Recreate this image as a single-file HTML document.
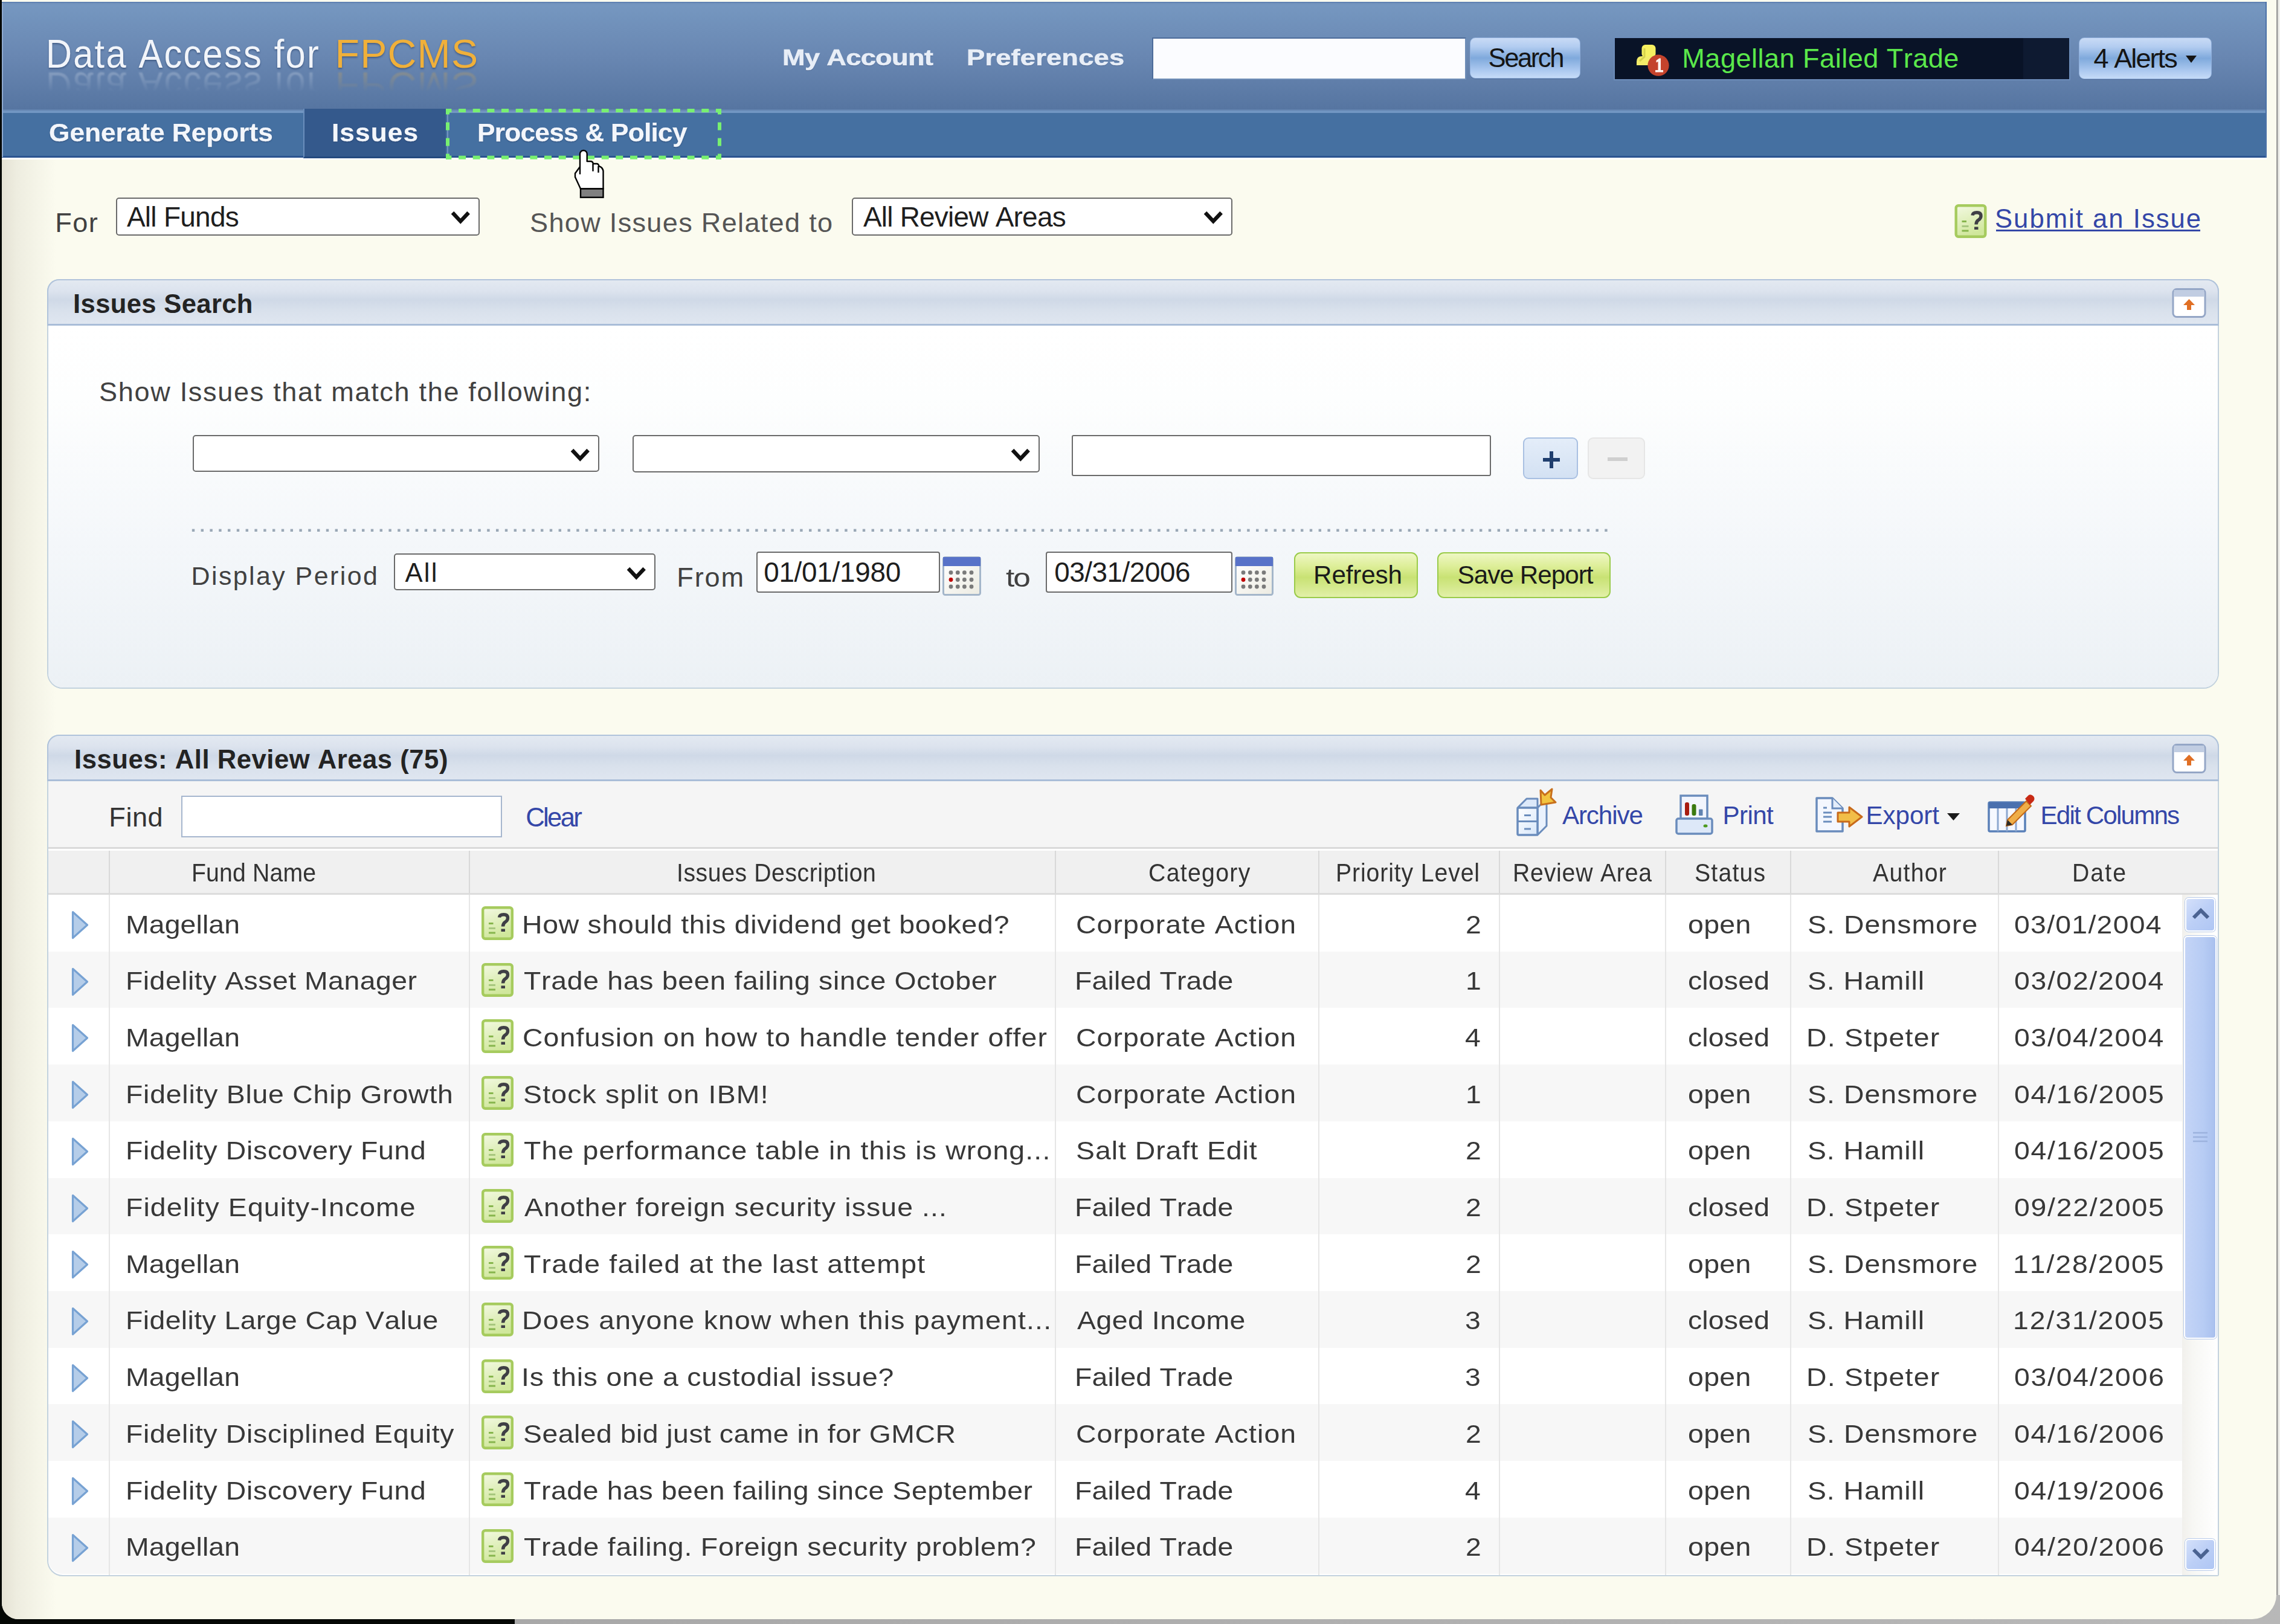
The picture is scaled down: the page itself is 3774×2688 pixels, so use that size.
<!DOCTYPE html>
<html><head><meta charset="utf-8"><title>Data Access for FPCMS - Issues</title>
<style>
html,body{margin:0;padding:0}
body{width:3774px;height:2688px;position:relative;overflow:hidden;background:#FBFBEF;font-family:"Liberation Sans",sans-serif;font-kerning:none}
.t{position:absolute;white-space:pre;line-height:0;font-kerning:none}
.r{position:absolute;box-sizing:border-box}
svg{position:absolute;overflow:visible}
</style></head><body>

<div class="r" style="left:0;top:0;width:3774px;height:2688px;background:linear-gradient(to right,#050805 0,#050805 852px,#A8A8A8 852px,#B8B8B8 100%)"></div>
<div class="r" style="left:3px;top:0;width:3765px;height:2680px;background:#FBFBEF;border-radius:0 0 40px 27px"></div>
<div class="r" style="left:3768px;top:0;width:6px;height:2640px;background:linear-gradient(to right,#9A9A9A 0,#9A9A9A 2px,#E8E8E4 3px,#F4F4F0 100%)"></div>
<div class="r" style="left:3px;top:260px;width:90px;height:2420px;background:linear-gradient(to right,#E4E2D4 0,#EEEDE0 25px,rgba(251,251,239,0) 90px);border-radius:0 0 0 27px"></div>
<div class="r" style="left:3px;top:3px;width:3749px;height:178px;background:linear-gradient(to bottom,#7191BA 0,#7597C0 6px,#6987B2 50%,#5675A1 100%)"></div>
<div class="r" style="left:3px;top:181px;width:3749px;height:2px;background:#6384B0"></div>
<div class="r" style="left:3px;top:183px;width:3749px;height:4px;background:#7196C2"></div>
<div class="r" style="left:3px;top:187px;width:3749px;height:71px;background:#4570A1"></div>
<div class="r" style="left:3px;top:258px;width:3749px;height:3px;background:#2B5490"></div>
<div class="r" style="left:3px;top:261px;width:3749px;height:3px;background:#FFFFFF"></div>
<div class="r" style="left:3px;top:3px;width:2px;height:257px;background:#8FAAD0"></div>
<div class="r" style="left:3px;top:3px;width:3749px;height:2px;background:#5F82B2"></div>
<div class="r" style="left:3750px;top:3px;width:2px;height:258px;background:#4C72A8"></div>
<div class="t" style="left:76.1px;top:88.5px;font-size:66.18px;letter-spacing:2.49px;color:#F2F5FA;transform:scaleX(0.9);transform-origin:0 0;text-shadow:0 2px 3px rgba(20,40,80,0.45);">Data Access for</div>
<div class="t" style="left:554.5px;top:88.5px;font-size:66.18px;letter-spacing:1.24px;color:#F0B03A;text-shadow:0 2px 3px rgba(20,40,80,0.45);">FPCMS</div>
<div class="r" style="left:0;top:0;width:900px;height:118px;transform:scaleY(-1);transform-origin:0 116px;-webkit-mask-image:linear-gradient(to bottom,rgba(0,0,0,0) 0,rgba(0,0,0,0) 80px,rgba(0,0,0,0.4) 112px);mask-image:linear-gradient(to bottom,rgba(0,0,0,0) 0,rgba(0,0,0,0) 80px,rgba(0,0,0,0.4) 112px);opacity:0.6;filter:blur(0.8px)">
<div class="t" style="left:76.1px;top:88.5px;font-size:66.18px;letter-spacing:2.49px;color:#F2F5FA;transform:scaleX(0.9);transform-origin:0 0;">Data Access for</div>
<div class="t" style="left:554.5px;top:88.5px;font-size:66.18px;letter-spacing:1.24px;color:#F0B03A;">FPCMS</div>
</div>
<div class="t" style="left:1294.9px;top:94.5px;font-size:37.09px;letter-spacing:-0.59px;color:#E8EEF7;font-weight:bold;transform:scaleX(1.22);transform-origin:0 0;-webkit-text-stroke:0.6px #E8EEF7;text-shadow:0 1px 1px rgba(30,50,90,0.5);">My Account</div>
<div class="t" style="left:1599.9px;top:94.5px;font-size:37.09px;letter-spacing:0.17px;color:#E8EEF7;font-weight:bold;transform:scaleX(1.22);transform-origin:0 0;-webkit-text-stroke:0.6px #E8EEF7;text-shadow:0 1px 1px rgba(30,50,90,0.5);">Preferences</div>
<div class="r " style="left:1907px;top:62px;width:520px;height:70px;background:#FBFCFF;border:2px solid #4D6C9A;border-right-color:#6F8EB8;border-bottom-color:#6F8EB8"></div>
<div class="r " style="left:2433px;top:62px;width:183px;height:68px;border-radius:9px;background:linear-gradient(to bottom,#C9DBF6 0,#B2CCF0 22%,#7FA9DC 50%,#A8C6EE 78%,#C6DCF8 100%);border:1px solid #8FAEDA;box-shadow:0 1px 0 rgba(40,60,100,0.25)"></div>
<div class="t" style="left:2463.5px;top:96.0px;font-size:43.64px;letter-spacing:-2.46px;color:#151515;">Search</div>
<div class="r " style="left:2671px;top:61px;width:756px;height:72px;background:#091327;border:2px solid #6D8DBA"></div>
<div class="r " style="left:3349px;top:63px;width:76px;height:68px;background:#0E1A31"></div>
<svg style="left:2700px;top:68px" width="70" height="62" viewBox="0 0 70 62">
<rect x="17.5" y="6" width="23" height="21" rx="6" fill="#F6F060"/>
<path d="M9 40 L9 34 Q9 25 18 25 L34 25 L34 40 Z" fill="#F3EC6A"/>
<path d="M22 12 L22 26 L14 33" fill="none" stroke="#C8C445" stroke-width="3" opacity="0.7"/>
<circle cx="45" cy="40.2" r="17.6" fill="#C4432C"/>
<path d="M41.5 32 L46.5 28.5 L49 28.5 L49 48 L53 48 L53 51.5 L40 51.5 L40 48 L44.5 48 L44.5 34 L41.5 35.5 Z" fill="#FFF4F0"/>
</svg>
<div class="t" style="left:2784.3px;top:96.5px;font-size:45.09px;letter-spacing:0.48px;color:#5BE84B;">Magellan Failed Trade</div>
<div class="r " style="left:3441px;top:62px;width:220px;height:69px;border-radius:9px;background:linear-gradient(to bottom,#C9DBF6 0,#B2CCF0 22%,#7FA9DC 50%,#A8C6EE 78%,#C6DCF8 100%);border:1px solid #8FAEDA;box-shadow:0 1px 0 rgba(40,60,100,0.25)"></div>
<div class="t" style="left:3465.5px;top:96.5px;font-size:45.09px;letter-spacing:-1.95px;color:#151515;">4 Alerts</div>
<svg style="left:3616px;top:90px" width="22" height="16"><path d="M2 2 L20 2 L11 14 Z" fill="#151515"/></svg>
<div class="t" style="left:81.2px;top:219.5px;font-size:42.18px;letter-spacing:-0.05px;color:#F3F6FB;font-weight:bold;transform:scaleX(1.05);transform-origin:0 0;-webkit-text-stroke:0.25px #F3F6FB;text-shadow:0 1px 2px rgba(20,40,80,0.55);">Generate Reports</div>
<div class="r " style="left:502px;top:180px;width:236px;height:82px;background:#34598C;border-left:2px solid #6A8EBC;border-bottom:3px solid #24497F"></div>
<div class="t" style="left:549.0px;top:219.5px;font-size:42.18px;letter-spacing:0.98px;color:#F3F6FB;font-weight:bold;transform:scaleX(1.05);transform-origin:0 0;-webkit-text-stroke:0.25px #F3F6FB;text-shadow:0 1px 2px rgba(20,40,80,0.55);">Issues</div>
<div class="r " style="left:740px;top:183px;width:449px;height:77px;border-left:2px solid #7393C0;border-top:2px solid #7393C0"></div>
<div class="t" style="left:790.0px;top:219.5px;font-size:42.18px;letter-spacing:-0.75px;color:#F3F6FB;font-weight:bold;transform:scaleX(1.05);transform-origin:0 0;-webkit-text-stroke:0.25px #F3F6FB;text-shadow:0 1px 2px rgba(20,40,80,0.55);">Process &amp; Policy</div>
<svg style="left:0;top:0" width="1300" height="300"><g fill="#78F070"><rect x="738.0" y="180" width="9.4" height="6"/><rect x="759.1" y="180" width="12.0" height="6"/><rect x="782.7" y="180" width="12.0" height="6"/><rect x="806.4" y="180" width="12.0" height="6"/><rect x="830.0" y="180" width="12.0" height="6"/><rect x="853.7" y="180" width="12.0" height="6"/><rect x="877.4" y="180" width="12.0" height="6"/><rect x="901.0" y="180" width="12.0" height="6"/><rect x="924.7" y="180" width="12.0" height="6"/><rect x="948.3" y="180" width="12.0" height="6"/><rect x="972.0" y="180" width="12.0" height="6"/><rect x="995.7" y="180" width="12.0" height="6"/><rect x="1019.3" y="180" width="12.0" height="6"/><rect x="1043.0" y="180" width="12.0" height="6"/><rect x="1066.6" y="180" width="12.0" height="6"/><rect x="1090.3" y="180" width="12.0" height="6"/><rect x="1114.0" y="180" width="12.0" height="6"/><rect x="1137.6" y="180" width="12.0" height="6"/><rect x="1161.3" y="180" width="12.0" height="6"/><rect x="1184.9" y="180" width="9.1" height="6"/><rect x="738.0" y="257.7" width="9.4" height="6"/><rect x="759.1" y="257.7" width="12.0" height="6"/><rect x="782.7" y="257.7" width="12.0" height="6"/><rect x="806.4" y="257.7" width="12.0" height="6"/><rect x="830.0" y="257.7" width="12.0" height="6"/><rect x="853.7" y="257.7" width="12.0" height="6"/><rect x="877.4" y="257.7" width="12.0" height="6"/><rect x="901.0" y="257.7" width="12.0" height="6"/><rect x="924.7" y="257.7" width="12.0" height="6"/><rect x="948.3" y="257.7" width="12.0" height="6"/><rect x="972.0" y="257.7" width="12.0" height="6"/><rect x="995.7" y="257.7" width="12.0" height="6"/><rect x="1019.3" y="257.7" width="12.0" height="6"/><rect x="1043.0" y="257.7" width="12.0" height="6"/><rect x="1066.6" y="257.7" width="12.0" height="6"/><rect x="1090.3" y="257.7" width="12.0" height="6"/><rect x="1114.0" y="257.7" width="12.0" height="6"/><rect x="1137.6" y="257.7" width="12.0" height="6"/><rect x="1161.3" y="257.7" width="12.0" height="6"/><rect x="1184.9" y="257.7" width="9.1" height="6"/><rect x="738" y="180.0" width="6" height="9.4"/><rect x="738" y="202.5" width="6" height="13.0"/><rect x="738" y="228.6" width="6" height="13.0"/><rect x="738" y="254.7" width="6" height="9.0"/><rect x="1188" y="180.0" width="6" height="9.4"/><rect x="1188" y="202.5" width="6" height="13.0"/><rect x="1188" y="228.6" width="6" height="13.0"/><rect x="1188" y="254.7" width="6" height="9.0"/><path d="M738 180 H747 V186 H744 V189 H738 Z"/><path d="M1194 180 H1185 V186 H1188 V189 H1194 Z"/><path d="M738 263.7 H747 V257.7 H744 V254.7 H738 Z"/><path d="M1194 263.7 H1185 V257.7 H1188 V254.7 H1194 Z"/></g></svg>
<div class="t" style="left:91.3px;top:368.5px;font-size:45.09px;letter-spacing:1.44px;color:#414141;">For</div>
<div class="r " style="left:192px;top:327px;width:602px;height:63px;background:#fff;border:2px solid #6A6A6A;border-radius:5px"></div>
<div class="t" style="left:209.9px;top:358.6px;font-size:45.96px;letter-spacing:-0.71px;color:#1E1E1E;">All Funds</div>
<svg style="left:742.7px;top:345.8px" width="38.6" height="28.2"><path d="M6 6 L19.3 20.2 L32.6 6" fill="none" stroke="#111111" stroke-width="6.3" stroke-linecap="butt" stroke-linejoin="miter"/></svg>
<div class="t" style="left:877.0px;top:368.5px;font-size:45.09px;letter-spacing:1.31px;color:#555555;">Show Issues Related to</div>
<div class="r " style="left:1410px;top:327px;width:630px;height:63px;background:#fff;border:2px solid #6A6A6A;border-radius:5px"></div>
<div class="t" style="left:1428.9px;top:358.6px;font-size:45.96px;letter-spacing:-0.77px;color:#1E1E1E;">All Review Areas</div>
<svg style="left:1988.7px;top:345.8px" width="38.6" height="28.2"><path d="M6 6 L19.3 20.2 L32.6 6" fill="none" stroke="#111111" stroke-width="6.3" stroke-linecap="butt" stroke-linejoin="miter"/></svg>
<svg style="left:3235px;top:338px" width="54" height="56" viewBox="0 0 53 56">
<defs><linearGradient id="ig3235_338" x1="0" y1="0" x2="0.3" y2="1"><stop offset="0" stop-color="#F3F9E2"/><stop offset="1" stop-color="#D0E79C"/></linearGradient></defs>
<rect x="2.2" y="2.2" width="48.6" height="51.6" rx="4" fill="url(#ig3235_338)" stroke="#A6CB5E" stroke-width="4.4"/>
<path d="M29.5 18.5 Q30 13.8 36.8 13.8 Q43.5 13.8 43.5 19.5 Q43.5 23.5 39.5 26 Q35.5 28.5 35.5 33.5" fill="none" stroke="#3F3F45" stroke-width="5.4"/>
<rect x="32.5" y="37.5" width="6.5" height="4.5" fill="#3F3F45"/>
<rect x="12" y="27" width="7.5" height="3" fill="#86B54C"/><rect x="12" y="35" width="11" height="3" fill="#A7C77E"/><rect x="12" y="42.5" width="11" height="3" fill="#86B54C"/>
</svg>
<div class="t" style="left:3302.0px;top:362.0px;font-size:43.64px;letter-spacing:2.02px;color:#3447A8;">Submit an Issue</div>
<div class="r " style="left:3304px;top:380px;width:338px;height:3px;background:#3447A8"></div>
<div class="r" style="left:78px;top:462px;width:3595px;height:678px;border:2px solid #C3D2DE;border-radius:20px 20px 26px 26px;overflow:hidden;background:#fff"></div>
<div class="r" style="left:78px;top:462px;width:3595px;height:77px;border-radius:20px 20px 0 0;border:2px solid #B0C3DB;border-bottom:3px solid #A9BDD8;background:linear-gradient(to bottom,#E3E9F1 0,#DCE3EE 25%,#CFD9E7 45%,#D9E1EC 70%,#DFE6F0 100%)"></div>
<div class="t" style="left:121.1px;top:503.0px;font-size:43.64px;letter-spacing:0.33px;color:#232323;font-weight:bold;">Issues Search</div>
<svg style="left:3594px;top:476px" width="60" height="52" viewBox="0 0 60 52">
<rect x="3" y="2.5" width="53" height="46" rx="6" fill="#fff" stroke="#94A6C6" stroke-width="3"/>
<rect x="4.5" y="4" width="50" height="11" fill="#C1CDE2"/>
<path d="M29.5 19 L39 29 L33 29 L33 37 L26 37 L26 29 L20 29 Z" fill="#E06F24"/>
</svg>
<div class="r" style="left:80px;top:539px;width:3591px;height:599px;border-radius:0 0 24px 24px;background:linear-gradient(to bottom,#FFFFFF 0,#FDFEFE 20%,#F4F7FA 60%,#ECF1F5 100%)"></div>
<div class="t" style="left:164.0px;top:648.5px;font-size:45.09px;letter-spacing:1.67px;color:#414141;">Show Issues that match the following:</div>
<div class="r " style="left:319px;top:720px;width:673px;height:61px;background:#fff;border:2px solid #6A6A6A;border-radius:5px"></div>
<svg style="left:940.7px;top:739.3px" width="38.6" height="28.2"><path d="M6 6 L19.3 20.2 L32.6 6" fill="none" stroke="#111111" stroke-width="6.3" stroke-linecap="butt" stroke-linejoin="miter"/></svg>
<div class="r " style="left:1047px;top:720px;width:674px;height:62px;background:#fff;border:2px solid #6A6A6A;border-radius:5px"></div>
<svg style="left:1669.7px;top:738.8px" width="38.6" height="28.2"><path d="M6 6 L19.3 20.2 L32.6 6" fill="none" stroke="#111111" stroke-width="6.3" stroke-linecap="butt" stroke-linejoin="miter"/></svg>
<div class="r " style="left:1774px;top:720px;width:694px;height:68px;background:#fff;border:2px solid #6A6A6A;border-radius:3px"></div>
<div class="r " style="left:2521px;top:724px;width:91px;height:69px;border-radius:9px;border:2px solid #A9C0E2;background:linear-gradient(to bottom,#E4EDF9 0,#D3E1F3 100%)"></div>
<svg style="left:2548px;top:741px" width="40" height="40"><path d="M6 20 H34 M20 6 V34" stroke="#1F3E6E" stroke-width="6"/></svg>
<div class="r " style="left:2628px;top:724px;width:95px;height:69px;border-radius:9px;border:2px solid #E6E6E6;background:#F2F2F2"></div>
<svg style="left:2658px;top:750px" width="40" height="20"><path d="M3 10 H36" stroke="#CFCFCF" stroke-width="6"/></svg>
<svg style="left:0;top:0" width="2700" height="900"><g fill="#9AA8B6"><rect x="317.8" y="875.6" width="4.4" height="4.4"/><rect x="332.6" y="875.6" width="4.4" height="4.4"/><rect x="347.4" y="875.6" width="4.4" height="4.4"/><rect x="362.2" y="875.6" width="4.4" height="4.4"/><rect x="377.0" y="875.6" width="4.4" height="4.4"/><rect x="391.8" y="875.6" width="4.4" height="4.4"/><rect x="406.6" y="875.6" width="4.4" height="4.4"/><rect x="421.4" y="875.6" width="4.4" height="4.4"/><rect x="436.2" y="875.6" width="4.4" height="4.4"/><rect x="451.0" y="875.6" width="4.4" height="4.4"/><rect x="465.8" y="875.6" width="4.4" height="4.4"/><rect x="480.6" y="875.6" width="4.4" height="4.4"/><rect x="495.4" y="875.6" width="4.4" height="4.4"/><rect x="510.2" y="875.6" width="4.4" height="4.4"/><rect x="525.0" y="875.6" width="4.4" height="4.4"/><rect x="539.8" y="875.6" width="4.4" height="4.4"/><rect x="554.6" y="875.6" width="4.4" height="4.4"/><rect x="569.4" y="875.6" width="4.4" height="4.4"/><rect x="584.2" y="875.6" width="4.4" height="4.4"/><rect x="599.0" y="875.6" width="4.4" height="4.4"/><rect x="613.8" y="875.6" width="4.4" height="4.4"/><rect x="628.6" y="875.6" width="4.4" height="4.4"/><rect x="643.4" y="875.6" width="4.4" height="4.4"/><rect x="658.2" y="875.6" width="4.4" height="4.4"/><rect x="673.0" y="875.6" width="4.4" height="4.4"/><rect x="687.8" y="875.6" width="4.4" height="4.4"/><rect x="702.6" y="875.6" width="4.4" height="4.4"/><rect x="717.4" y="875.6" width="4.4" height="4.4"/><rect x="732.2" y="875.6" width="4.4" height="4.4"/><rect x="747.0" y="875.6" width="4.4" height="4.4"/><rect x="761.8" y="875.6" width="4.4" height="4.4"/><rect x="776.6" y="875.6" width="4.4" height="4.4"/><rect x="791.4" y="875.6" width="4.4" height="4.4"/><rect x="806.2" y="875.6" width="4.4" height="4.4"/><rect x="821.0" y="875.6" width="4.4" height="4.4"/><rect x="835.8" y="875.6" width="4.4" height="4.4"/><rect x="850.6" y="875.6" width="4.4" height="4.4"/><rect x="865.4" y="875.6" width="4.4" height="4.4"/><rect x="880.2" y="875.6" width="4.4" height="4.4"/><rect x="895.0" y="875.6" width="4.4" height="4.4"/><rect x="909.8" y="875.6" width="4.4" height="4.4"/><rect x="924.6" y="875.6" width="4.4" height="4.4"/><rect x="939.4" y="875.6" width="4.4" height="4.4"/><rect x="954.2" y="875.6" width="4.4" height="4.4"/><rect x="969.0" y="875.6" width="4.4" height="4.4"/><rect x="983.8" y="875.6" width="4.4" height="4.4"/><rect x="998.6" y="875.6" width="4.4" height="4.4"/><rect x="1013.4" y="875.6" width="4.4" height="4.4"/><rect x="1028.2" y="875.6" width="4.4" height="4.4"/><rect x="1043.0" y="875.6" width="4.4" height="4.4"/><rect x="1057.8" y="875.6" width="4.4" height="4.4"/><rect x="1072.6" y="875.6" width="4.4" height="4.4"/><rect x="1087.4" y="875.6" width="4.4" height="4.4"/><rect x="1102.2" y="875.6" width="4.4" height="4.4"/><rect x="1117.0" y="875.6" width="4.4" height="4.4"/><rect x="1131.8" y="875.6" width="4.4" height="4.4"/><rect x="1146.6" y="875.6" width="4.4" height="4.4"/><rect x="1161.4" y="875.6" width="4.4" height="4.4"/><rect x="1176.2" y="875.6" width="4.4" height="4.4"/><rect x="1191.0" y="875.6" width="4.4" height="4.4"/><rect x="1205.8" y="875.6" width="4.4" height="4.4"/><rect x="1220.6" y="875.6" width="4.4" height="4.4"/><rect x="1235.4" y="875.6" width="4.4" height="4.4"/><rect x="1250.2" y="875.6" width="4.4" height="4.4"/><rect x="1265.0" y="875.6" width="4.4" height="4.4"/><rect x="1279.8" y="875.6" width="4.4" height="4.4"/><rect x="1294.6" y="875.6" width="4.4" height="4.4"/><rect x="1309.4" y="875.6" width="4.4" height="4.4"/><rect x="1324.2" y="875.6" width="4.4" height="4.4"/><rect x="1339.0" y="875.6" width="4.4" height="4.4"/><rect x="1353.8" y="875.6" width="4.4" height="4.4"/><rect x="1368.6" y="875.6" width="4.4" height="4.4"/><rect x="1383.4" y="875.6" width="4.4" height="4.4"/><rect x="1398.2" y="875.6" width="4.4" height="4.4"/><rect x="1413.0" y="875.6" width="4.4" height="4.4"/><rect x="1427.8" y="875.6" width="4.4" height="4.4"/><rect x="1442.6" y="875.6" width="4.4" height="4.4"/><rect x="1457.4" y="875.6" width="4.4" height="4.4"/><rect x="1472.2" y="875.6" width="4.4" height="4.4"/><rect x="1487.0" y="875.6" width="4.4" height="4.4"/><rect x="1501.8" y="875.6" width="4.4" height="4.4"/><rect x="1516.6" y="875.6" width="4.4" height="4.4"/><rect x="1531.4" y="875.6" width="4.4" height="4.4"/><rect x="1546.2" y="875.6" width="4.4" height="4.4"/><rect x="1561.0" y="875.6" width="4.4" height="4.4"/><rect x="1575.8" y="875.6" width="4.4" height="4.4"/><rect x="1590.6" y="875.6" width="4.4" height="4.4"/><rect x="1605.4" y="875.6" width="4.4" height="4.4"/><rect x="1620.2" y="875.6" width="4.4" height="4.4"/><rect x="1635.0" y="875.6" width="4.4" height="4.4"/><rect x="1649.8" y="875.6" width="4.4" height="4.4"/><rect x="1664.6" y="875.6" width="4.4" height="4.4"/><rect x="1679.4" y="875.6" width="4.4" height="4.4"/><rect x="1694.2" y="875.6" width="4.4" height="4.4"/><rect x="1709.0" y="875.6" width="4.4" height="4.4"/><rect x="1723.8" y="875.6" width="4.4" height="4.4"/><rect x="1738.6" y="875.6" width="4.4" height="4.4"/><rect x="1753.4" y="875.6" width="4.4" height="4.4"/><rect x="1768.2" y="875.6" width="4.4" height="4.4"/><rect x="1783.0" y="875.6" width="4.4" height="4.4"/><rect x="1797.8" y="875.6" width="4.4" height="4.4"/><rect x="1812.6" y="875.6" width="4.4" height="4.4"/><rect x="1827.4" y="875.6" width="4.4" height="4.4"/><rect x="1842.2" y="875.6" width="4.4" height="4.4"/><rect x="1857.0" y="875.6" width="4.4" height="4.4"/><rect x="1871.8" y="875.6" width="4.4" height="4.4"/><rect x="1886.6" y="875.6" width="4.4" height="4.4"/><rect x="1901.4" y="875.6" width="4.4" height="4.4"/><rect x="1916.2" y="875.6" width="4.4" height="4.4"/><rect x="1931.0" y="875.6" width="4.4" height="4.4"/><rect x="1945.8" y="875.6" width="4.4" height="4.4"/><rect x="1960.6" y="875.6" width="4.4" height="4.4"/><rect x="1975.4" y="875.6" width="4.4" height="4.4"/><rect x="1990.2" y="875.6" width="4.4" height="4.4"/><rect x="2005.0" y="875.6" width="4.4" height="4.4"/><rect x="2019.8" y="875.6" width="4.4" height="4.4"/><rect x="2034.6" y="875.6" width="4.4" height="4.4"/><rect x="2049.4" y="875.6" width="4.4" height="4.4"/><rect x="2064.2" y="875.6" width="4.4" height="4.4"/><rect x="2079.0" y="875.6" width="4.4" height="4.4"/><rect x="2093.8" y="875.6" width="4.4" height="4.4"/><rect x="2108.6" y="875.6" width="4.4" height="4.4"/><rect x="2123.4" y="875.6" width="4.4" height="4.4"/><rect x="2138.2" y="875.6" width="4.4" height="4.4"/><rect x="2153.0" y="875.6" width="4.4" height="4.4"/><rect x="2167.8" y="875.6" width="4.4" height="4.4"/><rect x="2182.6" y="875.6" width="4.4" height="4.4"/><rect x="2197.4" y="875.6" width="4.4" height="4.4"/><rect x="2212.2" y="875.6" width="4.4" height="4.4"/><rect x="2227.0" y="875.6" width="4.4" height="4.4"/><rect x="2241.8" y="875.6" width="4.4" height="4.4"/><rect x="2256.6" y="875.6" width="4.4" height="4.4"/><rect x="2271.4" y="875.6" width="4.4" height="4.4"/><rect x="2286.2" y="875.6" width="4.4" height="4.4"/><rect x="2301.0" y="875.6" width="4.4" height="4.4"/><rect x="2315.8" y="875.6" width="4.4" height="4.4"/><rect x="2330.6" y="875.6" width="4.4" height="4.4"/><rect x="2345.4" y="875.6" width="4.4" height="4.4"/><rect x="2360.2" y="875.6" width="4.4" height="4.4"/><rect x="2375.0" y="875.6" width="4.4" height="4.4"/><rect x="2389.8" y="875.6" width="4.4" height="4.4"/><rect x="2404.6" y="875.6" width="4.4" height="4.4"/><rect x="2419.4" y="875.6" width="4.4" height="4.4"/><rect x="2434.2" y="875.6" width="4.4" height="4.4"/><rect x="2449.0" y="875.6" width="4.4" height="4.4"/><rect x="2463.8" y="875.6" width="4.4" height="4.4"/><rect x="2478.6" y="875.6" width="4.4" height="4.4"/><rect x="2493.4" y="875.6" width="4.4" height="4.4"/><rect x="2508.2" y="875.6" width="4.4" height="4.4"/><rect x="2523.0" y="875.6" width="4.4" height="4.4"/><rect x="2537.8" y="875.6" width="4.4" height="4.4"/><rect x="2552.6" y="875.6" width="4.4" height="4.4"/><rect x="2567.4" y="875.6" width="4.4" height="4.4"/><rect x="2582.2" y="875.6" width="4.4" height="4.4"/><rect x="2597.0" y="875.6" width="4.4" height="4.4"/><rect x="2611.8" y="875.6" width="4.4" height="4.4"/><rect x="2626.6" y="875.6" width="4.4" height="4.4"/><rect x="2641.4" y="875.6" width="4.4" height="4.4"/><rect x="2656.2" y="875.6" width="4.4" height="4.4"/></g></svg>
<div class="t" style="left:316.5px;top:952.5px;font-size:42.91px;letter-spacing:2.44px;color:#414141;">Display Period</div>
<div class="r " style="left:652px;top:916px;width:433px;height:61px;background:#fff;border:2px solid #6A6A6A;border-radius:5px"></div>
<div class="t" style="left:670.5px;top:948.0px;font-size:43.64px;letter-spacing:2.25px;color:#1E1E1E;">All</div>
<svg style="left:1033.7px;top:934.8px" width="38.6" height="28.2"><path d="M6 6 L19.3 20.2 L32.6 6" fill="none" stroke="#111111" stroke-width="6.3" stroke-linecap="butt" stroke-linejoin="miter"/></svg>
<div class="t" style="left:1120.3px;top:955.5px;font-size:45.09px;letter-spacing:1.86px;color:#414141;">From</div>
<div class="r " style="left:1252px;top:913px;width:304px;height:68px;background:#fff;border:2px solid #6A6A6A;border-radius:4px"></div>
<div class="t" style="left:1264.2px;top:947.5px;font-size:45.82px;letter-spacing:-0.26px;color:#1E1E1E;">01/01/1980</div>
<svg style="left:1560px;top:921px" width="64" height="66" viewBox="0 0 64 66">
<defs><linearGradient id="cal1560" x1="0" y1="0" x2="1" y2="1"><stop offset="0" stop-color="#FFFFFF"/><stop offset="1" stop-color="#ECEBE2"/></linearGradient></defs>
<rect x="1.5" y="1.5" width="61" height="62" rx="3" fill="url(#cal1560)" stroke="#A4B6CA" stroke-width="3"/>
<rect x="1" y="1" width="62" height="15" fill="#5872C8"/>
<circle cx="14" cy="26.7" r="3.4" fill="#7A7A7A"/><circle cx="25.3" cy="26.7" r="3.4" fill="#7A7A7A"/><circle cx="36.4" cy="26.7" r="3.4" fill="#7A7A7A"/><circle cx="48" cy="26.7" r="3.4" fill="#7A7A7A"/><circle cx="14" cy="38.5" r="3.4" fill="#C00000"/><circle cx="25.3" cy="38.5" r="3.4" fill="#7A7A7A"/><circle cx="36.4" cy="38.5" r="3.4" fill="#7A7A7A"/><circle cx="48" cy="38.5" r="3.4" fill="#7A7A7A"/><circle cx="14" cy="50" r="3.4" fill="#7A7A7A"/><circle cx="25.3" cy="50" r="3.4" fill="#7A7A7A"/><circle cx="36.4" cy="50" r="3.4" fill="#7A7A7A"/><circle cx="48" cy="50" r="3.4" fill="#7A7A7A"/></svg>
<div class="t" style="left:1665.2px;top:956.5px;font-size:42.20px;letter-spacing:-1.66px;color:#414141;transform:scaleX(1.22);transform-origin:0 0;">to</div>
<div class="r " style="left:1731px;top:913px;width:309px;height:68px;background:#fff;border:2px solid #6A6A6A;border-radius:4px"></div>
<div class="t" style="left:1745.2px;top:947.5px;font-size:45.82px;letter-spacing:-0.45px;color:#1E1E1E;">03/31/2006</div>
<svg style="left:2044px;top:921px" width="64" height="66" viewBox="0 0 64 66">
<defs><linearGradient id="cal2044" x1="0" y1="0" x2="1" y2="1"><stop offset="0" stop-color="#FFFFFF"/><stop offset="1" stop-color="#ECEBE2"/></linearGradient></defs>
<rect x="1.5" y="1.5" width="61" height="62" rx="3" fill="url(#cal2044)" stroke="#A4B6CA" stroke-width="3"/>
<rect x="1" y="1" width="62" height="15" fill="#5872C8"/>
<circle cx="14" cy="26.7" r="3.4" fill="#7A7A7A"/><circle cx="25.3" cy="26.7" r="3.4" fill="#7A7A7A"/><circle cx="36.4" cy="26.7" r="3.4" fill="#7A7A7A"/><circle cx="48" cy="26.7" r="3.4" fill="#7A7A7A"/><circle cx="14" cy="38.5" r="3.4" fill="#C00000"/><circle cx="25.3" cy="38.5" r="3.4" fill="#7A7A7A"/><circle cx="36.4" cy="38.5" r="3.4" fill="#7A7A7A"/><circle cx="48" cy="38.5" r="3.4" fill="#7A7A7A"/><circle cx="14" cy="50" r="3.4" fill="#7A7A7A"/><circle cx="25.3" cy="50" r="3.4" fill="#7A7A7A"/><circle cx="36.4" cy="50" r="3.4" fill="#7A7A7A"/><circle cx="48" cy="50" r="3.4" fill="#7A7A7A"/></svg>
<div class="r " style="left:2142px;top:914px;width:205px;height:76px;border-radius:11px;border:2px solid #9ACB4A;background:linear-gradient(to bottom,#EEF7C4 0,#DDEE98 30%,#C9E274 55%,#D3E88A 75%,#E2F0A8 100%)"></div>
<div class="t" style="left:2174.1px;top:951.5px;font-size:42.18px;letter-spacing:-0.15px;color:#1A1A1A;">Refresh</div>
<div class="r " style="left:2379px;top:914px;width:287px;height:76px;border-radius:11px;border:2px solid #9ACB4A;background:linear-gradient(to bottom,#EEF7C4 0,#DDEE98 30%,#C9E274 55%,#D3E88A 75%,#E2F0A8 100%)"></div>
<div class="t" style="left:2412.6px;top:951.5px;font-size:42.18px;letter-spacing:-0.95px;color:#1A1A1A;">Save Report</div>
<div class="r" style="left:78px;top:1216px;width:3595px;height:1393px;border:2px solid #C3D2DE;border-radius:20px 20px 3px 26px;overflow:hidden;background:#fff"></div>
<div class="r" style="left:78px;top:1216px;width:3595px;height:77px;border-radius:20px 20px 0 0;border:2px solid #B0C3DB;border-bottom:3px solid #A9BDD8;background:linear-gradient(to bottom,#E3E9F1 0,#DCE3EE 25%,#CFD9E7 45%,#D9E1EC 70%,#DFE6F0 100%)"></div>
<div class="t" style="left:123.1px;top:1257.0px;font-size:43.64px;letter-spacing:0.52px;color:#232323;font-weight:bold;">Issues: All Review Areas (75)</div>
<svg style="left:3594px;top:1230px" width="60" height="52" viewBox="0 0 60 52">
<rect x="3" y="2.5" width="53" height="46" rx="6" fill="#fff" stroke="#94A6C6" stroke-width="3"/>
<rect x="4.5" y="4" width="50" height="11" fill="#C1CDE2"/>
<path d="M29.5 19 L39 29 L33 29 L33 37 L26 37 L26 29 L20 29 Z" fill="#E06F24"/>
</svg>
<div class="r " style="left:80px;top:1293px;width:3591px;height:110px;background:#F5F5F5"></div>
<div class="r " style="left:80px;top:1402px;width:3591px;height:3px;background:#DADADA"></div>
<div class="r " style="left:80px;top:1405px;width:3591px;height:3px;background:#FFFFFF"></div>
<div class="t" style="left:180.3px;top:1352.5px;font-size:45.09px;letter-spacing:0.55px;color:#333333;">Find</div>
<div class="r " style="left:300px;top:1317px;width:531px;height:69px;background:#fff;border:2px solid #A6B6CE"></div>
<div class="t" style="left:870.3px;top:1353.0px;font-size:43.64px;letter-spacing:-2.71px;color:#3447A8;">Clear</div>
<svg style="left:2505px;top:1300px" width="80" height="90" viewBox="0 0 80 90">
<defs><linearGradient id="arc1" x1="0" y1="0" x2="1" y2="1"><stop offset="0" stop-color="#FFFFFF"/><stop offset="1" stop-color="#D6E6FA"/></linearGradient></defs>
<path d="M7 37 L22 22 L40 22 L40 37 Z" fill="#DCE9FA" stroke="#6A8CBC" stroke-width="3" stroke-linejoin="round"/>
<path d="M40 37 L55 22 L55 67 L40 82 Z" fill="#EAF2FD" stroke="#6A8CBC" stroke-width="3" stroke-linejoin="round"/>
<rect x="7" y="37" width="33" height="45" rx="2" fill="url(#arc1)" stroke="#6A8CBC" stroke-width="3.5"/>
<line x1="7" y1="59.5" x2="40" y2="59.5" stroke="#6A8CBC" stroke-width="3"/>
<line x1="18" y1="49.5" x2="29" y2="49.5" stroke="#6A8CBC" stroke-width="3"/>
<line x1="18" y1="72" x2="29" y2="72" stroke="#6A8CBC" stroke-width="3"/>
<path d="M45 8 L52 16 L64 6 L62 20 L70 28 L58 30 L46 32 Z" fill="#F2C440" stroke="#C8701C" stroke-width="3" stroke-linejoin="round"/>
</svg>
<div class="t" style="left:2585.9px;top:1349.5px;font-size:42.18px;letter-spacing:-1.11px;color:#3447A8;">Archive</div>
<svg style="left:2770px;top:1312px" width="70" height="74" viewBox="0 0 70 74">
<rect x="12" y="5" width="44" height="38" fill="#F2F5FD" stroke="#6A8CBC" stroke-width="3.5"/>
<rect x="19" y="16" width="7" height="22" rx="3" fill="#A81C10"/>
<rect x="30.5" y="19" width="7" height="19" rx="3" fill="#3B7A10"/>
<rect x="42" y="27.5" width="6.5" height="10.5" rx="1" fill="#6183B0"/>
<rect x="5" y="43" width="59" height="25" rx="3" fill="#DDE8F8" stroke="#6A8CBC" stroke-width="3.5"/>
<ellipse cx="53" cy="55" rx="3.5" ry="2.5" fill="#4E9A20"/>
</svg>
<div class="t" style="left:2851.5px;top:1349.5px;font-size:42.18px;letter-spacing:-0.60px;color:#3447A8;">Print</div>
<svg style="left:3000px;top:1314px" width="90" height="70" viewBox="0 0 90 70">
<path d="M7 7 L33 7 L50 24 L50 62 L7 62 Z" fill="#F4F7FE" stroke="#6A8CBC" stroke-width="3.5" stroke-linejoin="round"/>
<path d="M33 7 L33 24 L50 24" fill="#E4EDFA" stroke="#6A8CBC" stroke-width="3"/>
<line x1="18" y1="23" x2="24" y2="23" stroke="#6A8CBC" stroke-width="3"/>
<line x1="18" y1="31" x2="32" y2="31" stroke="#6A8CBC" stroke-width="3"/>
<line x1="18" y1="38" x2="32" y2="38" stroke="#6A8CBC" stroke-width="3"/>
<line x1="18" y1="46" x2="32" y2="46" stroke="#6A8CBC" stroke-width="3"/>
<path d="M42 31 L61 31 L61 22 L82 38 L61 54 L61 46 L42 46 Z" fill="#F2BE48" stroke="#C86A1A" stroke-width="3" stroke-linejoin="round"/>
</svg>
<div class="t" style="left:3088.5px;top:1349.5px;font-size:42.18px;letter-spacing:-0.08px;color:#3447A8;">Export</div>
<svg style="left:3221px;top:1344px" width="26" height="16"><path d="M2 2 L23 2 L12.5 14 Z" fill="#1A1A1A"/></svg>
<svg style="left:3286px;top:1305px" width="90" height="78" viewBox="0 0 90 78">
<rect x="6" y="23" width="60" height="48" rx="2" fill="#F6F8FF" stroke="#5A80B8" stroke-width="3.5"/>
<rect x="6" y="23" width="60" height="10" fill="#4A70AE"/>
<line x1="21" y1="33" x2="21" y2="71" stroke="#8EA8D0" stroke-width="3"/>
<line x1="36" y1="33" x2="36" y2="71" stroke="#8EA8D0" stroke-width="3"/>
<line x1="51" y1="33" x2="51" y2="71" stroke="#8EA8D0" stroke-width="3"/>
<path d="M37 52 L68 21 L76 29 L45 60 L35 62 Z" fill="#F0AE48" stroke="#C46A18" stroke-width="2"/>
<path d="M35 62 L37 52 L45 60 Z" fill="#2A2A2A"/>
<path d="M66 17 L72 11 Q76 9 80 13 Q83 17 80 21 L74 27 Z" fill="#C82A14"/>
</svg>
<div class="t" style="left:3377.5px;top:1349.5px;font-size:42.18px;letter-spacing:-1.83px;color:#3447A8;">Edit Columns</div>
<div class="r " style="left:80px;top:1408px;width:3591px;height:71px;background:#F0F0F0"></div>
<div class="r " style="left:80px;top:1478px;width:3591px;height:3px;background:#DCDCDC"></div>
<div class="r " style="left:180px;top:1408px;width:2px;height:71px;background:#D9D9D9"></div>
<div class="r " style="left:180px;top:1481px;width:2px;height:1126px;background:#E6E6E6"></div>
<div class="r " style="left:776px;top:1408px;width:2px;height:71px;background:#D9D9D9"></div>
<div class="r " style="left:776px;top:1481px;width:2px;height:1126px;background:#E6E6E6"></div>
<div class="r " style="left:1746px;top:1408px;width:2px;height:71px;background:#D9D9D9"></div>
<div class="r " style="left:1746px;top:1481px;width:2px;height:1126px;background:#E6E6E6"></div>
<div class="r " style="left:2182px;top:1408px;width:2px;height:71px;background:#D9D9D9"></div>
<div class="r " style="left:2182px;top:1481px;width:2px;height:1126px;background:#E6E6E6"></div>
<div class="r " style="left:2481px;top:1408px;width:2px;height:71px;background:#D9D9D9"></div>
<div class="r " style="left:2481px;top:1481px;width:2px;height:1126px;background:#E6E6E6"></div>
<div class="r " style="left:2756px;top:1408px;width:2px;height:71px;background:#D9D9D9"></div>
<div class="r " style="left:2756px;top:1481px;width:2px;height:1126px;background:#E6E6E6"></div>
<div class="r " style="left:2963px;top:1408px;width:2px;height:71px;background:#D9D9D9"></div>
<div class="r " style="left:2963px;top:1481px;width:2px;height:1126px;background:#E6E6E6"></div>
<div class="r " style="left:3307px;top:1408px;width:2px;height:71px;background:#D9D9D9"></div>
<div class="r " style="left:3307px;top:1481px;width:2px;height:1126px;background:#E6E6E6"></div>
<div class="t" style="left:316.8px;top:1444.5px;font-size:42.18px;letter-spacing:0.16px;color:#333333;transform:scaleX(0.93);transform-origin:0 0;">Fund Name</div>
<div class="t" style="left:1120.4px;top:1444.5px;font-size:42.18px;letter-spacing:0.60px;color:#333333;transform:scaleX(0.93);transform-origin:0 0;">Issues Description</div>
<div class="t" style="left:1901.0px;top:1444.5px;font-size:42.18px;letter-spacing:1.40px;color:#333333;transform:scaleX(0.93);transform-origin:0 0;">Category</div>
<div class="t" style="left:2210.8px;top:1444.5px;font-size:42.18px;letter-spacing:0.94px;color:#333333;transform:scaleX(0.93);transform-origin:0 0;">Priority Level</div>
<div class="t" style="left:2503.8px;top:1444.5px;font-size:42.18px;letter-spacing:0.83px;color:#333333;transform:scaleX(0.93);transform-origin:0 0;">Review Area</div>
<div class="t" style="left:2805.2px;top:1444.5px;font-size:42.18px;letter-spacing:1.30px;color:#333333;transform:scaleX(0.93);transform-origin:0 0;">Status</div>
<div class="t" style="left:3099.5px;top:1444.5px;font-size:42.18px;letter-spacing:1.37px;color:#333333;transform:scaleX(0.93);transform-origin:0 0;">Author</div>
<div class="t" style="left:3429.8px;top:1444.5px;font-size:42.18px;letter-spacing:2.20px;color:#333333;transform:scaleX(0.93);transform-origin:0 0;">Date</div>
<svg style="left:116px;top:1505.0px" width="34" height="50" viewBox="0 0 34 50"><path d="M4.5 4.5 L28.5 26 L4.5 47.5 Z" fill="#B5CDE9" stroke="#77A2D3" stroke-width="3.2" stroke-linejoin="round"/></svg>
<div class="t" style="left:207.7px;top:1530.5px;font-size:42.18px;letter-spacing:0.10px;color:#383838;transform:scaleX(1.1);transform-origin:0 0;">Magellan</div>
<svg style="left:797px;top:1500px" width="53" height="56" viewBox="0 0 53 56">
<defs><linearGradient id="ig797_1500" x1="0" y1="0" x2="0.3" y2="1"><stop offset="0" stop-color="#F3F9E2"/><stop offset="1" stop-color="#D0E79C"/></linearGradient></defs>
<rect x="2.2" y="2.2" width="48.6" height="51.6" rx="4" fill="url(#ig797_1500)" stroke="#A6CB5E" stroke-width="4.4"/>
<path d="M29.5 18.5 Q30 13.8 36.8 13.8 Q43.5 13.8 43.5 19.5 Q43.5 23.5 39.5 26 Q35.5 28.5 35.5 33.5" fill="none" stroke="#3F3F45" stroke-width="5.4"/>
<rect x="32.5" y="37.5" width="6.5" height="4.5" fill="#3F3F45"/>
<rect x="12" y="27" width="7.5" height="3" fill="#86B54C"/><rect x="12" y="35" width="11" height="3" fill="#A7C77E"/><rect x="12" y="42.5" width="11" height="3" fill="#86B54C"/>
</svg>
<div class="t" style="left:863.9px;top:1530.5px;font-size:42.18px;letter-spacing:0.65px;color:#383838;transform:scaleX(1.1);transform-origin:0 0;">How should this dividend get booked?</div>
<div class="t" style="left:1780.7px;top:1530.5px;font-size:42.18px;letter-spacing:0.97px;color:#383838;transform:scaleX(1.1);transform-origin:0 0;">Corporate Action</div>
<div class="t" style="left:2425.6px;top:1530.5px;font-size:42.18px;letter-spacing:0.00px;color:#383838;transform:scaleX(1.1);transform-origin:0 0;">2</div>
<div class="t" style="left:2794.0px;top:1530.5px;font-size:42.18px;letter-spacing:0.30px;color:#383838;transform:scaleX(1.1);transform-origin:0 0;">open</div>
<div class="t" style="left:2991.9px;top:1530.5px;font-size:42.18px;letter-spacing:0.96px;color:#383838;transform:scaleX(1.1);transform-origin:0 0;">S. Densmore</div>
<div class="t" style="left:3333.8px;top:1530.5px;font-size:42.18px;letter-spacing:1.15px;color:#383838;transform:scaleX(1.1);transform-origin:0 0;">03/01/2004</div>
<div class="r" style="left:80px;top:1574.7px;width:3534px;height:93.7px;background:#F7F7F7;"></div>
<svg style="left:116px;top:1598.7px" width="34" height="50" viewBox="0 0 34 50"><path d="M4.5 4.5 L28.5 26 L4.5 47.5 Z" fill="#B5CDE9" stroke="#77A2D3" stroke-width="3.2" stroke-linejoin="round"/></svg>
<div class="t" style="left:207.7px;top:1624.2px;font-size:42.18px;letter-spacing:0.44px;color:#383838;transform:scaleX(1.1);transform-origin:0 0;">Fidelity Asset Manager</div>
<svg style="left:797px;top:1594px" width="53" height="56" viewBox="0 0 53 56">
<defs><linearGradient id="ig797_1594" x1="0" y1="0" x2="0.3" y2="1"><stop offset="0" stop-color="#F3F9E2"/><stop offset="1" stop-color="#D0E79C"/></linearGradient></defs>
<rect x="2.2" y="2.2" width="48.6" height="51.6" rx="4" fill="url(#ig797_1594)" stroke="#A6CB5E" stroke-width="4.4"/>
<path d="M29.5 18.5 Q30 13.8 36.8 13.8 Q43.5 13.8 43.5 19.5 Q43.5 23.5 39.5 26 Q35.5 28.5 35.5 33.5" fill="none" stroke="#3F3F45" stroke-width="5.4"/>
<rect x="32.5" y="37.5" width="6.5" height="4.5" fill="#3F3F45"/>
<rect x="12" y="27" width="7.5" height="3" fill="#86B54C"/><rect x="12" y="35" width="11" height="3" fill="#A7C77E"/><rect x="12" y="42.5" width="11" height="3" fill="#86B54C"/>
</svg>
<div class="t" style="left:866.7px;top:1624.2px;font-size:42.18px;letter-spacing:0.64px;color:#383838;transform:scaleX(1.1);transform-origin:0 0;">Trade has been failing since October</div>
<div class="t" style="left:1779.2px;top:1624.2px;font-size:42.18px;letter-spacing:0.15px;color:#383838;transform:scaleX(1.1);transform-origin:0 0;">Failed Trade</div>
<div class="t" style="left:2425.5px;top:1624.2px;font-size:42.18px;letter-spacing:0.00px;color:#383838;transform:scaleX(1.1);transform-origin:0 0;">1</div>
<div class="t" style="left:2794.0px;top:1624.2px;font-size:42.18px;letter-spacing:0.16px;color:#383838;transform:scaleX(1.1);transform-origin:0 0;">closed</div>
<div class="t" style="left:2991.9px;top:1624.2px;font-size:42.18px;letter-spacing:0.84px;color:#383838;transform:scaleX(1.1);transform-origin:0 0;">S. Hamill</div>
<div class="t" style="left:3333.8px;top:1624.2px;font-size:42.18px;letter-spacing:1.53px;color:#383838;transform:scaleX(1.1);transform-origin:0 0;">03/02/2004</div>
<svg style="left:116px;top:1692.4px" width="34" height="50" viewBox="0 0 34 50"><path d="M4.5 4.5 L28.5 26 L4.5 47.5 Z" fill="#B5CDE9" stroke="#77A2D3" stroke-width="3.2" stroke-linejoin="round"/></svg>
<div class="t" style="left:207.7px;top:1717.9px;font-size:42.18px;letter-spacing:0.10px;color:#383838;transform:scaleX(1.1);transform-origin:0 0;">Magellan</div>
<svg style="left:797px;top:1687px" width="53" height="56" viewBox="0 0 53 56">
<defs><linearGradient id="ig797_1687" x1="0" y1="0" x2="0.3" y2="1"><stop offset="0" stop-color="#F3F9E2"/><stop offset="1" stop-color="#D0E79C"/></linearGradient></defs>
<rect x="2.2" y="2.2" width="48.6" height="51.6" rx="4" fill="url(#ig797_1687)" stroke="#A6CB5E" stroke-width="4.4"/>
<path d="M29.5 18.5 Q30 13.8 36.8 13.8 Q43.5 13.8 43.5 19.5 Q43.5 23.5 39.5 26 Q35.5 28.5 35.5 33.5" fill="none" stroke="#3F3F45" stroke-width="5.4"/>
<rect x="32.5" y="37.5" width="6.5" height="4.5" fill="#3F3F45"/>
<rect x="12" y="27" width="7.5" height="3" fill="#86B54C"/><rect x="12" y="35" width="11" height="3" fill="#A7C77E"/><rect x="12" y="42.5" width="11" height="3" fill="#86B54C"/>
</svg>
<div class="t" style="left:865.4px;top:1717.9px;font-size:42.18px;letter-spacing:1.02px;color:#383838;transform:scaleX(1.1);transform-origin:0 0;">Confusion on how to handle tender offer</div>
<div class="t" style="left:1780.7px;top:1717.9px;font-size:42.18px;letter-spacing:0.97px;color:#383838;transform:scaleX(1.1);transform-origin:0 0;">Corporate Action</div>
<div class="t" style="left:2424.5px;top:1717.9px;font-size:42.18px;letter-spacing:0.00px;color:#383838;transform:scaleX(1.1);transform-origin:0 0;">4</div>
<div class="t" style="left:2794.0px;top:1717.9px;font-size:42.18px;letter-spacing:0.16px;color:#383838;transform:scaleX(1.1);transform-origin:0 0;">closed</div>
<div class="t" style="left:2990.2px;top:1717.9px;font-size:42.18px;letter-spacing:1.15px;color:#383838;transform:scaleX(1.1);transform-origin:0 0;">D. Stpeter</div>
<div class="t" style="left:3333.8px;top:1717.9px;font-size:42.18px;letter-spacing:1.53px;color:#383838;transform:scaleX(1.1);transform-origin:0 0;">03/04/2004</div>
<div class="r" style="left:80px;top:1762.1px;width:3534px;height:93.7px;background:#F7F7F7;"></div>
<svg style="left:116px;top:1786.1px" width="34" height="50" viewBox="0 0 34 50"><path d="M4.5 4.5 L28.5 26 L4.5 47.5 Z" fill="#B5CDE9" stroke="#77A2D3" stroke-width="3.2" stroke-linejoin="round"/></svg>
<div class="t" style="left:207.7px;top:1811.6px;font-size:42.18px;letter-spacing:0.70px;color:#383838;transform:scaleX(1.1);transform-origin:0 0;">Fidelity Blue Chip Growth</div>
<svg style="left:797px;top:1781px" width="53" height="56" viewBox="0 0 53 56">
<defs><linearGradient id="ig797_1781" x1="0" y1="0" x2="0.3" y2="1"><stop offset="0" stop-color="#F3F9E2"/><stop offset="1" stop-color="#D0E79C"/></linearGradient></defs>
<rect x="2.2" y="2.2" width="48.6" height="51.6" rx="4" fill="url(#ig797_1781)" stroke="#A6CB5E" stroke-width="4.4"/>
<path d="M29.5 18.5 Q30 13.8 36.8 13.8 Q43.5 13.8 43.5 19.5 Q43.5 23.5 39.5 26 Q35.5 28.5 35.5 33.5" fill="none" stroke="#3F3F45" stroke-width="5.4"/>
<rect x="32.5" y="37.5" width="6.5" height="4.5" fill="#3F3F45"/>
<rect x="12" y="27" width="7.5" height="3" fill="#86B54C"/><rect x="12" y="35" width="11" height="3" fill="#A7C77E"/><rect x="12" y="42.5" width="11" height="3" fill="#86B54C"/>
</svg>
<div class="t" style="left:865.6px;top:1811.6px;font-size:42.18px;letter-spacing:1.08px;color:#383838;transform:scaleX(1.1);transform-origin:0 0;">Stock split on IBM!</div>
<div class="t" style="left:1780.7px;top:1811.6px;font-size:42.18px;letter-spacing:0.97px;color:#383838;transform:scaleX(1.1);transform-origin:0 0;">Corporate Action</div>
<div class="t" style="left:2425.5px;top:1811.6px;font-size:42.18px;letter-spacing:0.00px;color:#383838;transform:scaleX(1.1);transform-origin:0 0;">1</div>
<div class="t" style="left:2794.0px;top:1811.6px;font-size:42.18px;letter-spacing:0.30px;color:#383838;transform:scaleX(1.1);transform-origin:0 0;">open</div>
<div class="t" style="left:2991.9px;top:1811.6px;font-size:42.18px;letter-spacing:0.96px;color:#383838;transform:scaleX(1.1);transform-origin:0 0;">S. Densmore</div>
<div class="t" style="left:3333.8px;top:1811.6px;font-size:42.18px;letter-spacing:1.59px;color:#383838;transform:scaleX(1.1);transform-origin:0 0;">04/16/2005</div>
<svg style="left:116px;top:1879.8px" width="34" height="50" viewBox="0 0 34 50"><path d="M4.5 4.5 L28.5 26 L4.5 47.5 Z" fill="#B5CDE9" stroke="#77A2D3" stroke-width="3.2" stroke-linejoin="round"/></svg>
<div class="t" style="left:207.7px;top:1905.3px;font-size:42.18px;letter-spacing:0.61px;color:#383838;transform:scaleX(1.1);transform-origin:0 0;">Fidelity Discovery Fund</div>
<svg style="left:797px;top:1875px" width="53" height="56" viewBox="0 0 53 56">
<defs><linearGradient id="ig797_1875" x1="0" y1="0" x2="0.3" y2="1"><stop offset="0" stop-color="#F3F9E2"/><stop offset="1" stop-color="#D0E79C"/></linearGradient></defs>
<rect x="2.2" y="2.2" width="48.6" height="51.6" rx="4" fill="url(#ig797_1875)" stroke="#A6CB5E" stroke-width="4.4"/>
<path d="M29.5 18.5 Q30 13.8 36.8 13.8 Q43.5 13.8 43.5 19.5 Q43.5 23.5 39.5 26 Q35.5 28.5 35.5 33.5" fill="none" stroke="#3F3F45" stroke-width="5.4"/>
<rect x="32.5" y="37.5" width="6.5" height="4.5" fill="#3F3F45"/>
<rect x="12" y="27" width="7.5" height="3" fill="#86B54C"/><rect x="12" y="35" width="11" height="3" fill="#A7C77E"/><rect x="12" y="42.5" width="11" height="3" fill="#86B54C"/>
</svg>
<div class="t" style="left:866.7px;top:1905.3px;font-size:42.18px;letter-spacing:1.05px;color:#383838;transform:scaleX(1.1);transform-origin:0 0;">The performance table in this is wrong...</div>
<div class="t" style="left:1780.9px;top:1905.3px;font-size:42.18px;letter-spacing:0.88px;color:#383838;transform:scaleX(1.1);transform-origin:0 0;">Salt Draft Edit</div>
<div class="t" style="left:2425.6px;top:1905.3px;font-size:42.18px;letter-spacing:0.00px;color:#383838;transform:scaleX(1.1);transform-origin:0 0;">2</div>
<div class="t" style="left:2794.0px;top:1905.3px;font-size:42.18px;letter-spacing:0.30px;color:#383838;transform:scaleX(1.1);transform-origin:0 0;">open</div>
<div class="t" style="left:2991.9px;top:1905.3px;font-size:42.18px;letter-spacing:0.84px;color:#383838;transform:scaleX(1.1);transform-origin:0 0;">S. Hamill</div>
<div class="t" style="left:3333.8px;top:1905.3px;font-size:42.18px;letter-spacing:1.59px;color:#383838;transform:scaleX(1.1);transform-origin:0 0;">04/16/2005</div>
<div class="r" style="left:80px;top:1949.5px;width:3534px;height:93.7px;background:#F7F7F7;"></div>
<svg style="left:116px;top:1973.5px" width="34" height="50" viewBox="0 0 34 50"><path d="M4.5 4.5 L28.5 26 L4.5 47.5 Z" fill="#B5CDE9" stroke="#77A2D3" stroke-width="3.2" stroke-linejoin="round"/></svg>
<div class="t" style="left:207.7px;top:1999.0px;font-size:42.18px;letter-spacing:1.01px;color:#383838;transform:scaleX(1.1);transform-origin:0 0;">Fidelity Equity-Income</div>
<svg style="left:797px;top:1968px" width="53" height="56" viewBox="0 0 53 56">
<defs><linearGradient id="ig797_1968" x1="0" y1="0" x2="0.3" y2="1"><stop offset="0" stop-color="#F3F9E2"/><stop offset="1" stop-color="#D0E79C"/></linearGradient></defs>
<rect x="2.2" y="2.2" width="48.6" height="51.6" rx="4" fill="url(#ig797_1968)" stroke="#A6CB5E" stroke-width="4.4"/>
<path d="M29.5 18.5 Q30 13.8 36.8 13.8 Q43.5 13.8 43.5 19.5 Q43.5 23.5 39.5 26 Q35.5 28.5 35.5 33.5" fill="none" stroke="#3F3F45" stroke-width="5.4"/>
<rect x="32.5" y="37.5" width="6.5" height="4.5" fill="#3F3F45"/>
<rect x="12" y="27" width="7.5" height="3" fill="#86B54C"/><rect x="12" y="35" width="11" height="3" fill="#A7C77E"/><rect x="12" y="42.5" width="11" height="3" fill="#86B54C"/>
</svg>
<div class="t" style="left:867.6px;top:1999.0px;font-size:42.18px;letter-spacing:1.00px;color:#383838;transform:scaleX(1.1);transform-origin:0 0;">Another foreign security issue ...</div>
<div class="t" style="left:1779.2px;top:1999.0px;font-size:42.18px;letter-spacing:0.15px;color:#383838;transform:scaleX(1.1);transform-origin:0 0;">Failed Trade</div>
<div class="t" style="left:2425.6px;top:1999.0px;font-size:42.18px;letter-spacing:0.00px;color:#383838;transform:scaleX(1.1);transform-origin:0 0;">2</div>
<div class="t" style="left:2794.0px;top:1999.0px;font-size:42.18px;letter-spacing:0.16px;color:#383838;transform:scaleX(1.1);transform-origin:0 0;">closed</div>
<div class="t" style="left:2990.2px;top:1999.0px;font-size:42.18px;letter-spacing:1.15px;color:#383838;transform:scaleX(1.1);transform-origin:0 0;">D. Stpeter</div>
<div class="t" style="left:3333.8px;top:1999.0px;font-size:42.18px;letter-spacing:1.59px;color:#383838;transform:scaleX(1.1);transform-origin:0 0;">09/22/2005</div>
<svg style="left:116px;top:2067.2px" width="34" height="50" viewBox="0 0 34 50"><path d="M4.5 4.5 L28.5 26 L4.5 47.5 Z" fill="#B5CDE9" stroke="#77A2D3" stroke-width="3.2" stroke-linejoin="round"/></svg>
<div class="t" style="left:207.7px;top:2092.7px;font-size:42.18px;letter-spacing:0.10px;color:#383838;transform:scaleX(1.1);transform-origin:0 0;">Magellan</div>
<svg style="left:797px;top:2062px" width="53" height="56" viewBox="0 0 53 56">
<defs><linearGradient id="ig797_2062" x1="0" y1="0" x2="0.3" y2="1"><stop offset="0" stop-color="#F3F9E2"/><stop offset="1" stop-color="#D0E79C"/></linearGradient></defs>
<rect x="2.2" y="2.2" width="48.6" height="51.6" rx="4" fill="url(#ig797_2062)" stroke="#A6CB5E" stroke-width="4.4"/>
<path d="M29.5 18.5 Q30 13.8 36.8 13.8 Q43.5 13.8 43.5 19.5 Q43.5 23.5 39.5 26 Q35.5 28.5 35.5 33.5" fill="none" stroke="#3F3F45" stroke-width="5.4"/>
<rect x="32.5" y="37.5" width="6.5" height="4.5" fill="#3F3F45"/>
<rect x="12" y="27" width="7.5" height="3" fill="#86B54C"/><rect x="12" y="35" width="11" height="3" fill="#A7C77E"/><rect x="12" y="42.5" width="11" height="3" fill="#86B54C"/>
</svg>
<div class="t" style="left:866.7px;top:2092.7px;font-size:42.18px;letter-spacing:1.10px;color:#383838;transform:scaleX(1.1);transform-origin:0 0;">Trade failed at the last attempt</div>
<div class="t" style="left:1779.2px;top:2092.7px;font-size:42.18px;letter-spacing:0.15px;color:#383838;transform:scaleX(1.1);transform-origin:0 0;">Failed Trade</div>
<div class="t" style="left:2425.6px;top:2092.7px;font-size:42.18px;letter-spacing:0.00px;color:#383838;transform:scaleX(1.1);transform-origin:0 0;">2</div>
<div class="t" style="left:2794.0px;top:2092.7px;font-size:42.18px;letter-spacing:0.30px;color:#383838;transform:scaleX(1.1);transform-origin:0 0;">open</div>
<div class="t" style="left:2991.9px;top:2092.7px;font-size:42.18px;letter-spacing:0.96px;color:#383838;transform:scaleX(1.1);transform-origin:0 0;">S. Densmore</div>
<div class="t" style="left:3332.2px;top:2092.7px;font-size:42.18px;letter-spacing:1.75px;color:#383838;transform:scaleX(1.1);transform-origin:0 0;">11/28/2005</div>
<div class="r" style="left:80px;top:2136.9px;width:3534px;height:93.7px;background:#F7F7F7;"></div>
<svg style="left:116px;top:2160.9px" width="34" height="50" viewBox="0 0 34 50"><path d="M4.5 4.5 L28.5 26 L4.5 47.5 Z" fill="#B5CDE9" stroke="#77A2D3" stroke-width="3.2" stroke-linejoin="round"/></svg>
<div class="t" style="left:207.7px;top:2186.4px;font-size:42.18px;letter-spacing:0.37px;color:#383838;transform:scaleX(1.1);transform-origin:0 0;">Fidelity Large Cap Value</div>
<svg style="left:797px;top:2156px" width="53" height="56" viewBox="0 0 53 56">
<defs><linearGradient id="ig797_2156" x1="0" y1="0" x2="0.3" y2="1"><stop offset="0" stop-color="#F3F9E2"/><stop offset="1" stop-color="#D0E79C"/></linearGradient></defs>
<rect x="2.2" y="2.2" width="48.6" height="51.6" rx="4" fill="url(#ig797_2156)" stroke="#A6CB5E" stroke-width="4.4"/>
<path d="M29.5 18.5 Q30 13.8 36.8 13.8 Q43.5 13.8 43.5 19.5 Q43.5 23.5 39.5 26 Q35.5 28.5 35.5 33.5" fill="none" stroke="#3F3F45" stroke-width="5.4"/>
<rect x="32.5" y="37.5" width="6.5" height="4.5" fill="#3F3F45"/>
<rect x="12" y="27" width="7.5" height="3" fill="#86B54C"/><rect x="12" y="35" width="11" height="3" fill="#A7C77E"/><rect x="12" y="42.5" width="11" height="3" fill="#86B54C"/>
</svg>
<div class="t" style="left:863.9px;top:2186.4px;font-size:42.18px;letter-spacing:1.09px;color:#383838;transform:scaleX(1.1);transform-origin:0 0;">Does anyone know when this payment...</div>
<div class="t" style="left:1782.9px;top:2186.4px;font-size:42.18px;letter-spacing:0.46px;color:#383838;transform:scaleX(1.1);transform-origin:0 0;">Aged Income</div>
<div class="t" style="left:2425.2px;top:2186.4px;font-size:42.18px;letter-spacing:0.00px;color:#383838;transform:scaleX(1.1);transform-origin:0 0;">3</div>
<div class="t" style="left:2794.0px;top:2186.4px;font-size:42.18px;letter-spacing:0.16px;color:#383838;transform:scaleX(1.1);transform-origin:0 0;">closed</div>
<div class="t" style="left:2991.9px;top:2186.4px;font-size:42.18px;letter-spacing:0.84px;color:#383838;transform:scaleX(1.1);transform-origin:0 0;">S. Hamill</div>
<div class="t" style="left:3332.2px;top:2186.4px;font-size:42.18px;letter-spacing:1.75px;color:#383838;transform:scaleX(1.1);transform-origin:0 0;">12/31/2005</div>
<svg style="left:116px;top:2254.6px" width="34" height="50" viewBox="0 0 34 50"><path d="M4.5 4.5 L28.5 26 L4.5 47.5 Z" fill="#B5CDE9" stroke="#77A2D3" stroke-width="3.2" stroke-linejoin="round"/></svg>
<div class="t" style="left:207.7px;top:2280.1px;font-size:42.18px;letter-spacing:0.10px;color:#383838;transform:scaleX(1.1);transform-origin:0 0;">Magellan</div>
<svg style="left:797px;top:2250px" width="53" height="56" viewBox="0 0 53 56">
<defs><linearGradient id="ig797_2250" x1="0" y1="0" x2="0.3" y2="1"><stop offset="0" stop-color="#F3F9E2"/><stop offset="1" stop-color="#D0E79C"/></linearGradient></defs>
<rect x="2.2" y="2.2" width="48.6" height="51.6" rx="4" fill="url(#ig797_2250)" stroke="#A6CB5E" stroke-width="4.4"/>
<path d="M29.5 18.5 Q30 13.8 36.8 13.8 Q43.5 13.8 43.5 19.5 Q43.5 23.5 39.5 26 Q35.5 28.5 35.5 33.5" fill="none" stroke="#3F3F45" stroke-width="5.4"/>
<rect x="32.5" y="37.5" width="6.5" height="4.5" fill="#3F3F45"/>
<rect x="12" y="27" width="7.5" height="3" fill="#86B54C"/><rect x="12" y="35" width="11" height="3" fill="#A7C77E"/><rect x="12" y="42.5" width="11" height="3" fill="#86B54C"/>
</svg>
<div class="t" style="left:863.4px;top:2280.1px;font-size:42.18px;letter-spacing:0.73px;color:#383838;transform:scaleX(1.1);transform-origin:0 0;">Is this one a custodial issue?</div>
<div class="t" style="left:1779.2px;top:2280.1px;font-size:42.18px;letter-spacing:0.15px;color:#383838;transform:scaleX(1.1);transform-origin:0 0;">Failed Trade</div>
<div class="t" style="left:2425.2px;top:2280.1px;font-size:42.18px;letter-spacing:0.00px;color:#383838;transform:scaleX(1.1);transform-origin:0 0;">3</div>
<div class="t" style="left:2794.0px;top:2280.1px;font-size:42.18px;letter-spacing:0.30px;color:#383838;transform:scaleX(1.1);transform-origin:0 0;">open</div>
<div class="t" style="left:2990.2px;top:2280.1px;font-size:42.18px;letter-spacing:1.15px;color:#383838;transform:scaleX(1.1);transform-origin:0 0;">D. Stpeter</div>
<div class="t" style="left:3333.8px;top:2280.1px;font-size:42.18px;letter-spacing:1.60px;color:#383838;transform:scaleX(1.1);transform-origin:0 0;">03/04/2006</div>
<div class="r" style="left:80px;top:2324.3px;width:3534px;height:93.7px;background:#F7F7F7;"></div>
<svg style="left:116px;top:2348.3px" width="34" height="50" viewBox="0 0 34 50"><path d="M4.5 4.5 L28.5 26 L4.5 47.5 Z" fill="#B5CDE9" stroke="#77A2D3" stroke-width="3.2" stroke-linejoin="round"/></svg>
<div class="t" style="left:207.7px;top:2373.8px;font-size:42.18px;letter-spacing:0.61px;color:#383838;transform:scaleX(1.1);transform-origin:0 0;">Fidelity Disciplined Equity</div>
<svg style="left:797px;top:2343px" width="53" height="56" viewBox="0 0 53 56">
<defs><linearGradient id="ig797_2343" x1="0" y1="0" x2="0.3" y2="1"><stop offset="0" stop-color="#F3F9E2"/><stop offset="1" stop-color="#D0E79C"/></linearGradient></defs>
<rect x="2.2" y="2.2" width="48.6" height="51.6" rx="4" fill="url(#ig797_2343)" stroke="#A6CB5E" stroke-width="4.4"/>
<path d="M29.5 18.5 Q30 13.8 36.8 13.8 Q43.5 13.8 43.5 19.5 Q43.5 23.5 39.5 26 Q35.5 28.5 35.5 33.5" fill="none" stroke="#3F3F45" stroke-width="5.4"/>
<rect x="32.5" y="37.5" width="6.5" height="4.5" fill="#3F3F45"/>
<rect x="12" y="27" width="7.5" height="3" fill="#86B54C"/><rect x="12" y="35" width="11" height="3" fill="#A7C77E"/><rect x="12" y="42.5" width="11" height="3" fill="#86B54C"/>
</svg>
<div class="t" style="left:865.6px;top:2373.8px;font-size:42.18px;letter-spacing:0.43px;color:#383838;transform:scaleX(1.1);transform-origin:0 0;">Sealed bid just came in for GMCR</div>
<div class="t" style="left:1780.7px;top:2373.8px;font-size:42.18px;letter-spacing:0.97px;color:#383838;transform:scaleX(1.1);transform-origin:0 0;">Corporate Action</div>
<div class="t" style="left:2425.6px;top:2373.8px;font-size:42.18px;letter-spacing:0.00px;color:#383838;transform:scaleX(1.1);transform-origin:0 0;">2</div>
<div class="t" style="left:2794.0px;top:2373.8px;font-size:42.18px;letter-spacing:0.30px;color:#383838;transform:scaleX(1.1);transform-origin:0 0;">open</div>
<div class="t" style="left:2991.9px;top:2373.8px;font-size:42.18px;letter-spacing:0.96px;color:#383838;transform:scaleX(1.1);transform-origin:0 0;">S. Densmore</div>
<div class="t" style="left:3333.8px;top:2373.8px;font-size:42.18px;letter-spacing:1.60px;color:#383838;transform:scaleX(1.1);transform-origin:0 0;">04/16/2006</div>
<svg style="left:116px;top:2442.0px" width="34" height="50" viewBox="0 0 34 50"><path d="M4.5 4.5 L28.5 26 L4.5 47.5 Z" fill="#B5CDE9" stroke="#77A2D3" stroke-width="3.2" stroke-linejoin="round"/></svg>
<div class="t" style="left:207.7px;top:2467.5px;font-size:42.18px;letter-spacing:0.61px;color:#383838;transform:scaleX(1.1);transform-origin:0 0;">Fidelity Discovery Fund</div>
<svg style="left:797px;top:2437px" width="53" height="56" viewBox="0 0 53 56">
<defs><linearGradient id="ig797_2437" x1="0" y1="0" x2="0.3" y2="1"><stop offset="0" stop-color="#F3F9E2"/><stop offset="1" stop-color="#D0E79C"/></linearGradient></defs>
<rect x="2.2" y="2.2" width="48.6" height="51.6" rx="4" fill="url(#ig797_2437)" stroke="#A6CB5E" stroke-width="4.4"/>
<path d="M29.5 18.5 Q30 13.8 36.8 13.8 Q43.5 13.8 43.5 19.5 Q43.5 23.5 39.5 26 Q35.5 28.5 35.5 33.5" fill="none" stroke="#3F3F45" stroke-width="5.4"/>
<rect x="32.5" y="37.5" width="6.5" height="4.5" fill="#3F3F45"/>
<rect x="12" y="27" width="7.5" height="3" fill="#86B54C"/><rect x="12" y="35" width="11" height="3" fill="#A7C77E"/><rect x="12" y="42.5" width="11" height="3" fill="#86B54C"/>
</svg>
<div class="t" style="left:866.7px;top:2467.5px;font-size:42.18px;letter-spacing:0.54px;color:#383838;transform:scaleX(1.1);transform-origin:0 0;">Trade has been failing since September</div>
<div class="t" style="left:1779.2px;top:2467.5px;font-size:42.18px;letter-spacing:0.15px;color:#383838;transform:scaleX(1.1);transform-origin:0 0;">Failed Trade</div>
<div class="t" style="left:2424.5px;top:2467.5px;font-size:42.18px;letter-spacing:0.00px;color:#383838;transform:scaleX(1.1);transform-origin:0 0;">4</div>
<div class="t" style="left:2794.0px;top:2467.5px;font-size:42.18px;letter-spacing:0.30px;color:#383838;transform:scaleX(1.1);transform-origin:0 0;">open</div>
<div class="t" style="left:2991.9px;top:2467.5px;font-size:42.18px;letter-spacing:0.84px;color:#383838;transform:scaleX(1.1);transform-origin:0 0;">S. Hamill</div>
<div class="t" style="left:3333.8px;top:2467.5px;font-size:42.18px;letter-spacing:1.60px;color:#383838;transform:scaleX(1.1);transform-origin:0 0;">04/19/2006</div>
<div class="r" style="left:80px;top:2511.7px;width:3534px;height:93.7px;background:#F7F7F7;border-radius:0 0 0 24px"></div>
<svg style="left:116px;top:2535.7px" width="34" height="50" viewBox="0 0 34 50"><path d="M4.5 4.5 L28.5 26 L4.5 47.5 Z" fill="#B5CDE9" stroke="#77A2D3" stroke-width="3.2" stroke-linejoin="round"/></svg>
<div class="t" style="left:207.7px;top:2561.2px;font-size:42.18px;letter-spacing:0.10px;color:#383838;transform:scaleX(1.1);transform-origin:0 0;">Magellan</div>
<svg style="left:797px;top:2531px" width="53" height="56" viewBox="0 0 53 56">
<defs><linearGradient id="ig797_2531" x1="0" y1="0" x2="0.3" y2="1"><stop offset="0" stop-color="#F3F9E2"/><stop offset="1" stop-color="#D0E79C"/></linearGradient></defs>
<rect x="2.2" y="2.2" width="48.6" height="51.6" rx="4" fill="url(#ig797_2531)" stroke="#A6CB5E" stroke-width="4.4"/>
<path d="M29.5 18.5 Q30 13.8 36.8 13.8 Q43.5 13.8 43.5 19.5 Q43.5 23.5 39.5 26 Q35.5 28.5 35.5 33.5" fill="none" stroke="#3F3F45" stroke-width="5.4"/>
<rect x="32.5" y="37.5" width="6.5" height="4.5" fill="#3F3F45"/>
<rect x="12" y="27" width="7.5" height="3" fill="#86B54C"/><rect x="12" y="35" width="11" height="3" fill="#A7C77E"/><rect x="12" y="42.5" width="11" height="3" fill="#86B54C"/>
</svg>
<div class="t" style="left:866.7px;top:2561.2px;font-size:42.18px;letter-spacing:0.71px;color:#383838;transform:scaleX(1.1);transform-origin:0 0;">Trade failing. Foreign security problem?</div>
<div class="t" style="left:1779.2px;top:2561.2px;font-size:42.18px;letter-spacing:0.15px;color:#383838;transform:scaleX(1.1);transform-origin:0 0;">Failed Trade</div>
<div class="t" style="left:2425.6px;top:2561.2px;font-size:42.18px;letter-spacing:0.00px;color:#383838;transform:scaleX(1.1);transform-origin:0 0;">2</div>
<div class="t" style="left:2794.0px;top:2561.2px;font-size:42.18px;letter-spacing:0.30px;color:#383838;transform:scaleX(1.1);transform-origin:0 0;">open</div>
<div class="t" style="left:2990.2px;top:2561.2px;font-size:42.18px;letter-spacing:1.15px;color:#383838;transform:scaleX(1.1);transform-origin:0 0;">D. Stpeter</div>
<div class="t" style="left:3333.8px;top:2561.2px;font-size:42.18px;letter-spacing:1.60px;color:#383838;transform:scaleX(1.1);transform-origin:0 0;">04/20/2006</div>
<div class="r " style="left:180px;top:1481px;width:2px;height:1126px;background:#E6E6E6"></div>
<div class="r " style="left:776px;top:1481px;width:2px;height:1126px;background:#E6E6E6"></div>
<div class="r " style="left:1746px;top:1481px;width:2px;height:1126px;background:#E6E6E6"></div>
<div class="r " style="left:2182px;top:1481px;width:2px;height:1126px;background:#E6E6E6"></div>
<div class="r " style="left:2481px;top:1481px;width:2px;height:1126px;background:#E6E6E6"></div>
<div class="r " style="left:2756px;top:1481px;width:2px;height:1126px;background:#E6E6E6"></div>
<div class="r " style="left:2963px;top:1481px;width:2px;height:1126px;background:#E6E6E6"></div>
<div class="r " style="left:3307px;top:1481px;width:2px;height:1126px;background:#E6E6E6"></div>
<div class="r " style="left:3612px;top:1481px;width:59px;height:1126px;background:linear-gradient(to right,#F1F0EC 0,#F7F7F4 30%,#FFFFFF 100%)"></div>
<div class="r " style="left:3617px;top:1486px;width:50px;height:56px;border-radius:6px;border:2px solid #FFFFFF;box-shadow:0 0 0 1px #B9CBEA;background:linear-gradient(135deg,#D4E0FA 0,#BCCFF6 50%,#AFC6F4 100%)"></div>
<svg style="left:3627px;top:1500px" width="32" height="24"><path d="M4 19 L16 7 L28 19" fill="none" stroke="#4B6391" stroke-width="6"/></svg>
<div class="r " style="left:3615px;top:1549px;width:54px;height:667px;border-radius:6px;border:2px solid #FFFFFF;box-shadow:0 0 0 1px #B9CBEA;background:linear-gradient(135deg,#D4E0FA 0,#BCCFF6 50%,#AFC6F4 100%);background:linear-gradient(to right,#C4D4F6 0,#B7CCF4 60%,#A9C0EE 100%)"></div>
<svg style="left:3628px;top:1872px" width="28" height="22"><path d="M2 3 H26 M2 10 H26 M2 17 H26" stroke="#9CB2DE" stroke-width="2.5"/></svg>
<div class="r " style="left:3617px;top:2547px;width:50px;height:52px;border-radius:6px;border:2px solid #FFFFFF;box-shadow:0 0 0 1px #B9CBEA;background:linear-gradient(135deg,#D4E0FA 0,#BCCFF6 50%,#AFC6F4 100%)"></div>
<svg style="left:3627px;top:2560px" width="32" height="24"><path d="M4 5 L16 17 L28 5" fill="none" stroke="#4B6391" stroke-width="6"/></svg>
<svg style="left:940px;top:240px" width="70" height="95" viewBox="0 0 70 95">
<path d="M20 36 L20 14.85 A5.85 5.85 0 0 1 31.7 14.85 L31.7 27 L38 27 Q41 27 42 31 L48 31 Q50.5 31 51.5 35 Q57.5 37 58.5 43 L58.5 72.5 L21 72.5 L12 53 L12 47 Z" fill="#FFFFFF" stroke="#000" stroke-width="2.4" stroke-linejoin="round"/>
<path d="M20 36 L20 48.5 M41.5 31 L41.5 43.6 M50.5 35 L50.5 45.7" stroke="#000" stroke-width="2.4"/>
<rect x="21" y="72.5" width="37.5" height="14.2" fill="#808080" stroke="#000" stroke-width="2.4"/>
</svg>
</body></html>
